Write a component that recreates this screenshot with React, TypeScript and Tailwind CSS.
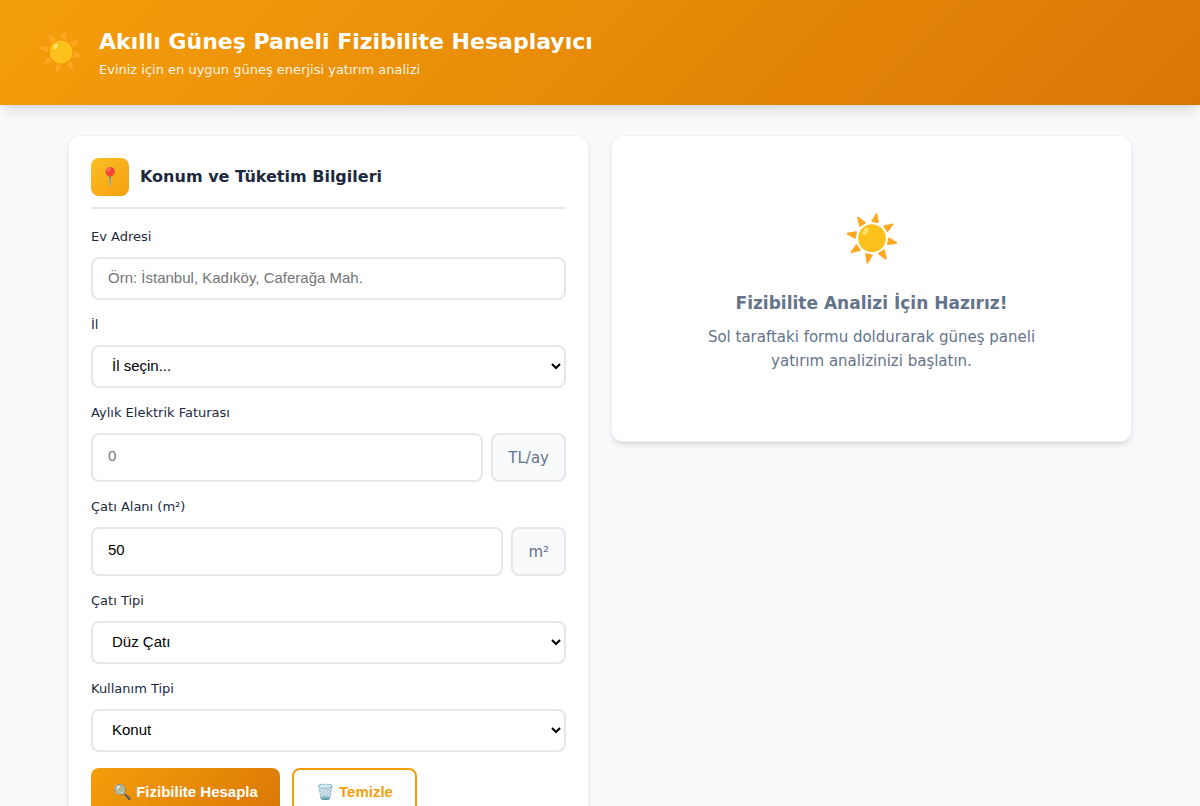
import React, { useState } from 'react';

interface Option {
  value: string;
  label: string;
}

const CITIES: Option[] = [
  { value: '', label: 'İl seçin...' },
  { value: 'istanbul', label: 'İstanbul' },
  { value: 'ankara', label: 'Ankara' },
  { value: 'izmir', label: 'İzmir' },
  { value: 'antalya', label: 'Antalya' },
];

const ROOF_TYPES: Option[] = [
  { value: 'flat', label: 'Düz Çatı' },
  { value: 'pitched', label: 'Eğimli Çatı' },
];

const USAGE_TYPES: Option[] = [
  { value: 'home', label: 'Konut' },
  { value: 'business', label: 'Ticari' },
];

const initialForm = {
  address: '',
  city: '',
  bill: '',
  area: '50',
  roof: 'flat',
  usage: 'home',
};

type FormState = typeof initialForm;

const controlClass =
  "w-full min-w-0 rounded-lg border-2 border-gray-200 bg-white px-[15px] pb-[3px] font-['Liberation_Sans',sans-serif] text-[15px] text-black placeholder:text-[#757575]";

interface FieldProps {
  id: keyof FormState;
  label: string;
  children: React.ReactNode;
}

const Field: React.FC<FieldProps> = ({ id, label, children }) => (
  <div className="mb-4">
    <label htmlFor={id} className="mb-[11px] block text-[13px] leading-[18px] font-medium text-slate-800">
      {label}
    </label>
    {children}
  </div>
);

interface SelectFieldProps {
  id: keyof FormState;
  label: string;
  value: string;
  options: Option[];
  onChange: (id: keyof FormState, value: string) => void;
}

const SelectField: React.FC<SelectFieldProps> = ({ id, label, value, options, onChange }) => (
  <Field id={id} label={label}>
    <select
      id={id}
      value={value}
      onChange={(e) => onChange(id, e.target.value)}
      className={`${controlClass} block h-[43px]`}
    >
      {options.map((option) => (
        <option key={option.value} value={option.value}>
          {option.label}
        </option>
      ))}
    </select>
  </Field>
);

const Unit: React.FC<{ children: React.ReactNode }> = ({ children }) => (
  <span className="flex items-center rounded-lg border-2 border-gray-200 bg-slate-50 px-[15px] text-[15px] text-[#64748b]">
    {children}
  </span>
);

const App: React.FC = () => {
  const [form, setForm] = useState<FormState>(initialForm);

  const update = (id: keyof FormState, value: string) => {
    setForm((prev) => ({ ...prev, [id]: value }));
  };

  return (
    <div className="min-h-screen bg-slate-50 font-['DejaVu_Sans',sans-serif] text-[15px] leading-6 text-slate-800">
      <header className="bg-linear-135 from-[#f59e0b] to-[#d97706] px-[38px] py-[25px] text-white shadow-lg">
        <div className="flex items-center gap-[15px]">
          <span className="text-[37px] leading-[53px]" aria-hidden="true">☀️</span>
          <div>
            <h1 className="text-[22px] leading-[34px] font-bold">Akıllı Güneş Paneli Fizibilite Hesaplayıcı</h1>
            <p className="text-[13px] leading-[21px] opacity-90">Eviniz için en uygun güneş enerjisi yatırım analizi</p>
          </div>
        </div>
      </header>

      <main className="mx-auto grid max-w-[1124px] grid-cols-1 items-start gap-[22px] px-[30px] py-[30px] md:grid-cols-2">
        <section className="rounded-xl border border-slate-200/60 bg-white p-[22px] shadow-md">
          <div className="mb-[19px] flex items-center gap-[11px] border-b-2 border-gray-200 pb-[11px]">
            <div
              className="flex size-[38px] items-center justify-center rounded-lg bg-linear-135 from-[#fbbf24] to-[#f59e0b] text-lg"
              aria-hidden="true"
            >
              📍
            </div>
            <h2 className="text-[16px] font-bold">Konum ve Tüketim Bilgileri</h2>
          </div>

          <form onSubmit={(e) => e.preventDefault()}>
            <Field id="address" label="Ev Adresi">
              <input
                id="address"
                type="text"
                placeholder="Örn: İstanbul, Kadıköy, Caferağa Mah."
                value={form.address}
                onChange={(e) => update('address', e.target.value)}
                className={`${controlClass} block h-[43px]`}
              />
            </Field>

            <SelectField id="city" label="İl" value={form.city} options={CITIES} onChange={update} />

            <Field id="bill" label="Aylık Elektrik Faturası">
              <div className="flex h-[49px] gap-2">
                <input
                  id="bill"
                  type="text"
                  inputMode="numeric"
                  placeholder="0"
                  value={form.bill}
                  onChange={(e) => update('bill', e.target.value)}
                  className={controlClass}
                />
                <Unit>TL/ay</Unit>
              </div>
            </Field>

            <Field id="area" label="Çatı Alanı (m²)">
              <div className="flex h-[49px] gap-2">
                <input
                  id="area"
                  type="text"
                  inputMode="numeric"
                  value={form.area}
                  onChange={(e) => update('area', e.target.value)}
                  className={controlClass}
                />
                <Unit>m²</Unit>
              </div>
            </Field>

            <SelectField id="roof" label="Çatı Tipi" value={form.roof} options={ROOF_TYPES} onChange={update} />
            <SelectField id="usage" label="Kullanım Tipi" value={form.usage} options={USAGE_TYPES} onChange={update} />

            <div className="flex gap-3 font-['Liberation_Sans',sans-serif] text-[15px] font-bold">
              <button
                type="submit"
                className="h-12 rounded-lg bg-linear-135 from-[#f59e0b] to-[#d97706] px-[22px] text-white"
              >
                🔍 Fizibilite Hesapla
              </button>
              <button
                type="button"
                onClick={() => setForm(initialForm)}
                className="h-12 rounded-lg border-2 border-[#f59e0b] bg-white px-[22px] text-[#f59e0b]"
              >
                🗑️ Temizle
              </button>
            </div>
          </form>
        </section>

        <section className="rounded-xl border border-slate-200/60 bg-white px-[22px] py-[68px] text-center text-[#64748b] shadow-md">
          <div className="mb-[15px] text-[45px] leading-[70px]" aria-hidden="true">☀️</div>
          <h3 className="mb-2 text-[17px] leading-7 font-bold">Fizibilite Analizi İçin Hazırız!</h3>
          <p className="mx-auto max-w-sm">Sol taraftaki formu doldurarak güneş paneli yatırım analizinizi başlatın.</p>
        </section>
      </main>
    </div>
  );
};

export default App;
